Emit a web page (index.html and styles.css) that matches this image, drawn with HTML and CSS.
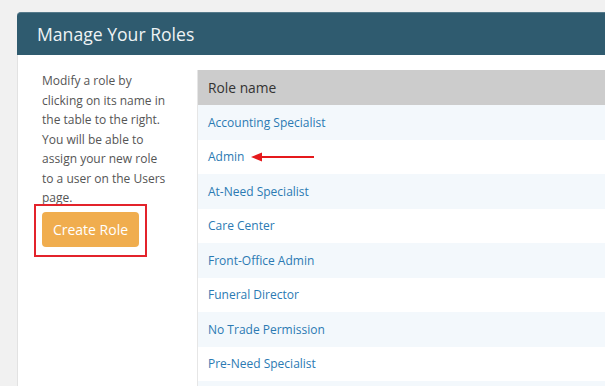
FILE: index.html
```html
<!DOCTYPE html>
<html lang="en">
<head>
<meta charset="utf-8">
<title>Manage Your Roles</title>
<link rel="stylesheet" href="styles.css">
</head>
<body>
<div class="panel">
  <div class="panel-header">Manage Your Roles</div>
  <div class="panel-body">
    <div class="intro">
      <p class="intro-text">Modify a role by clicking on its name in the table to the right. You will be able to assign your new role to a user on the Users page.</p>
      <div class="btn-wrap">
        <button class="btn-create" type="button">Create Role</button>
        <span class="highlight-box"></span>
      </div>
    </div>
    <div class="roles-table">
      <div class="roles-head">Role name</div>
      <div class="role-row"><a class="role-link" href="#">Accounting Specialist</a></div>
      <div class="role-row"><a class="role-link" href="#">Admin</a>
        <svg class="arrow" width="64" height="10" viewBox="0 0 64 10" aria-hidden="true">
          <path d="M0 5 L11 0.5 L11 9.5 Z" fill="#e5191c"/>
          <path d="M10 5 H63" stroke="#e5191c" stroke-width="2"/>
        </svg>
      </div>
      <div class="role-row"><a class="role-link" href="#">At-Need Specialist</a></div>
      <div class="role-row"><a class="role-link" href="#">Care Center</a></div>
      <div class="role-row"><a class="role-link" href="#">Front-Office Admin</a></div>
      <div class="role-row"><a class="role-link" href="#">Funeral Director</a></div>
      <div class="role-row"><a class="role-link" href="#">No Trade Permission</a></div>
      <div class="role-row"><a class="role-link" href="#">Pre-Need Specialist</a></div>
      <div class="role-row role-row-empty"></div>
    </div>
  </div>
</div>
</body>
</html>
```

FILE: styles.css
```css
html, body {
  margin: 0;
  padding: 0;
}
body {
  background: #f1f1f1;
  font-family: "Open Sans", "Noto Sans", sans-serif;
  overflow: hidden;
  height: 386px;
}
.panel {
  margin: 12px 0 0 17px;
  width: 588px;
}
.panel-header {
  height: 43px;
  box-sizing: border-box;
  background: #2f5b6f;
  border-top: 1px solid #557a8b;
  border-radius: 4px 0 0 0;
  color: #eef3f5;
  font-size: 17.6px;
  display: flex;
  align-items: center;
  padding-left: 20px;
}
.panel-body {
  background: #ffffff;
  border-left: 1px solid #e2e2e2;
  display: flex;
  align-items: flex-start;
  height: 331px;
  overflow: hidden;
}
.intro {
  width: 155px;
  flex: none;
  box-sizing: border-box;
  padding: 16px 0 0 24px;
}
.intro-text {
  margin: 0;
  width: 126px;
  font-size: 12px;
  line-height: 19.5px;
  color: #555555;
}
.btn-wrap {
  position: relative;
  width: 97px;
  margin-top: 4px;
}
.btn-create {
  display: block;
  width: 97px;
  height: 35px;
  border: 0;
  border-radius: 4px;
  background: #f0ad4e;
  color: #ffffff;
  font-family: "Open Sans", "Noto Sans", sans-serif;
  font-size: 14px;
  padding: 0;
}
.highlight-box {
  position: absolute;
  top: -8px;
  left: -8px;
  right: -8px;
  bottom: -10px;
  border: 2px solid #e3232b;
}
.roles-table {
  flex: 1;
  margin-left: 24px;
  margin-top: 15px;
  border-left: 1px solid #e6e6e6;
}
.roles-head {
  height: 35px;
  background: #cccccc;
  color: #333333;
  font-size: 13.8px;
  display: flex;
  align-items: center;
  padding-left: 10px;
}
.role-row {
  height: 34.5px;
  display: flex;
  align-items: center;
  padding-left: 10px;
  background: #ffffff;
}
.role-row:nth-child(even) {
  background: #f3f8fc;
}
.role-link {
  color: #2b7ab3;
  text-decoration: none;
  font-size: 12px;
}
.arrow {
  margin-left: 7px;
  display: block;
}
```
